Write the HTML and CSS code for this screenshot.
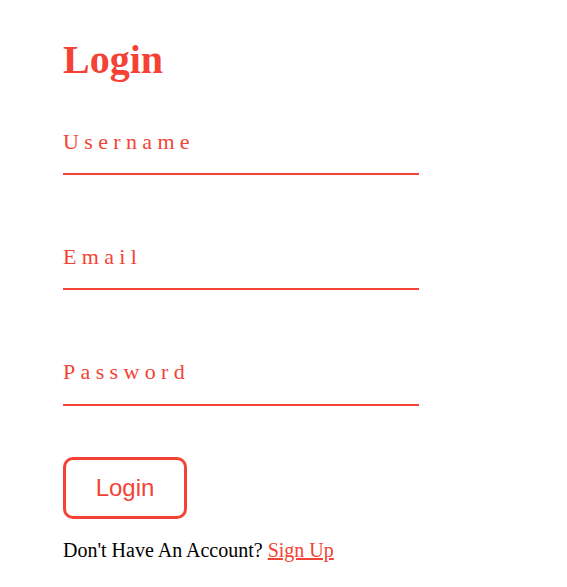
FILE: index.html
```html
<!DOCTYPE html>
<html lang="en">
<head>
<meta charset="utf-8">
<title>Login</title>
<link rel="stylesheet" href="styles.css">
</head>
<body>
<main class="page">
  <h1 class="title">Login</h1>
  <form class="form">
    <div class="field">
      <label class="label" for="username">Username</label>
      <input class="input" id="username" type="text">
    </div>
    <div class="field">
      <label class="label" for="email">Email</label>
      <input class="input" id="email" type="email">
    </div>
    <div class="field">
      <label class="label" for="password">Password</label>
      <input class="input" id="password" type="password">
    </div>
    <button class="btn" type="button">Login</button>
  </form>
  <p class="note">Don't Have An Account? <a class="link" href="#">Sign Up</a></p>
</main>
</body>
</html>
```
FILE: styles.css
```css
html, body {
  margin: 0;
  padding: 0;
  background: #ffffff;
}
.page {
  padding: 0 63px;
  font-family: "Liberation Serif", "Times New Roman", serif;
}
.title {
  margin: 38px 0 0;
  font-size: 40px;
  line-height: 44px;
  font-weight: bold;
  color: #f44336;
}
.form {
  margin-top: 46.6px;
  display: flex;
  flex-direction: column;
  align-items: flex-start;
}
.field {
  display: flex;
  flex-direction: column;
  margin-bottom: 69px;
}
.field:last-of-type {
  margin-bottom: 51px;
}
.label {
  font-size: 22px;
  line-height: 26px;
  letter-spacing: 5.35px;
  color: #f44336;
}
.input {
  box-sizing: border-box;
  width: 356px;
  height: 20.4px;
  padding: 0;
  border: 0;
  border-bottom: 2px solid #f44336;
  outline: none;
  background: transparent;
}
.btn {
  box-sizing: border-box;
  width: 124px;
  height: 62px;
  padding: 0;
  border: 3px solid #f44336;
  border-radius: 10px;
  background: #ffffff;
  color: #f44336;
  font-family: "Liberation Sans", Arial, sans-serif;
  font-size: 24px;
}
.note {
  margin: 20.6px 0 0;
  font-size: 20px;
  line-height: 23px;
  color: #000000;
}
.link {
  color: #f44336;
}
```
